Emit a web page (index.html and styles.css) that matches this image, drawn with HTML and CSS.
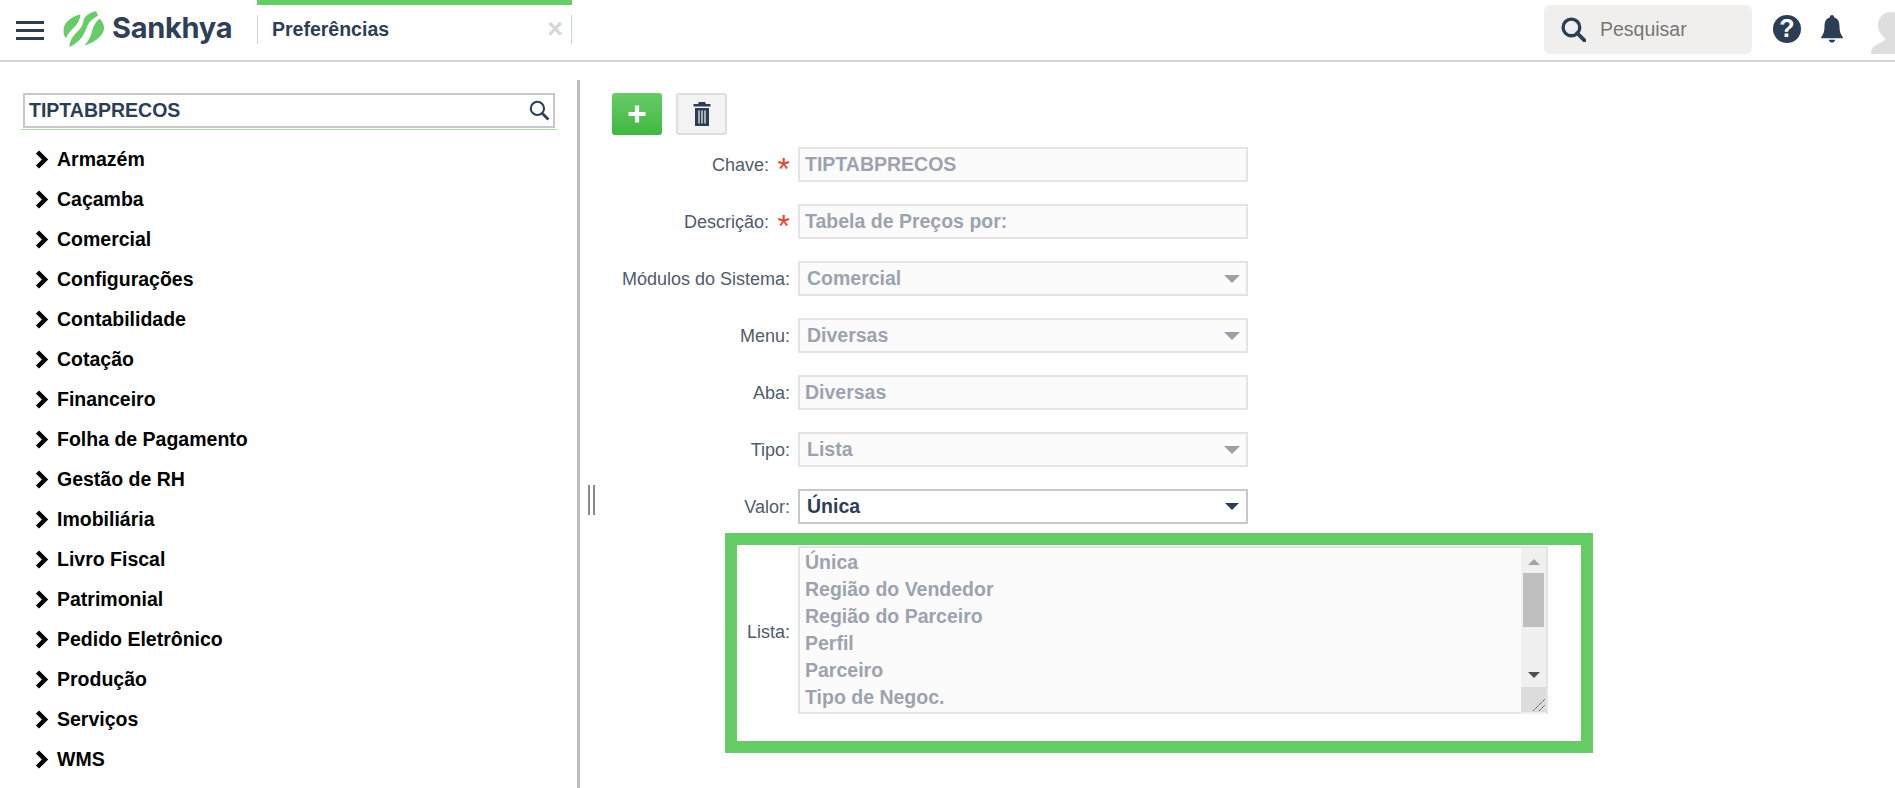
FILE: index.html
```html
<!DOCTYPE html>
<html lang="pt-BR">
<head>
<meta charset="utf-8">
<title>Preferências</title>
<link rel="stylesheet" href="styles.css">
</head>
<body>
<header class="topbar">
  <div class="menu-btn"><span></span><span></span><span></span></div>
  <svg class="logo-mark" viewBox="0 0 41 36" width="41" height="36">
    <path d="M17.500 3.500 C11 4.500 3 9.500 1 16 C0 20 0.500 24.500 3 27.500 C4.500 22.500 7.500 20 11.500 16 C15 12.500 17 8.500 17.500 3.500Z"/>
    <path d="M33 0 C27 1.500 21 5 20.500 10 C20.200 14 18 17 14 21 C9.500 25.500 6.500 30 6.500 36 C11 34 15.500 30.500 18.500 26.500 C22 22 23 18 25 13.500 C27 9.500 31 7 35 4.500Z"/>
    <path d="M36.500 7.500 C39.500 10.500 41.500 14 41 18 C40 26 30 32 21.500 34.500 C25.500 29.500 28 25.500 29 20.500 C30 15.500 32.500 11 36.500 7.500Z"/>
  </svg>
  <span class="logo-text">Sankhya</span>
  <div class="tab">
    <div class="tab-inner">
      <span class="tab-title">Preferências</span>
      <span class="tab-close">×</span>
    </div>
  </div>
  <div class="top-right">
    <div class="global-search">
      <svg class="global-search-icon" viewBox="0 0 24 24" width="25" height="25"><circle cx="10" cy="10" r="8" fill="none" stroke="#2c3e55" stroke-width="3.2"/><path d="M15.500 15.500 L22.500 22.500" stroke="#2c3e55" stroke-width="3.600" stroke-linecap="round"/></svg>
      <span class="global-search-text">Pesquisar</span>
    </div>
    <svg class="help" viewBox="0 0 28 28" width="28" height="28"><circle cx="14" cy="14" r="14" fill="#2c3e55"/><text x="14" y="22" text-anchor="middle" class="help-q">?</text></svg>
    <svg class="bell" viewBox="0 0 24 30" width="24" height="28"><path fill="#2c3e55" d="M12 0 C13.600 0 14.400 1.200 14.400 2.800 C18.600 4 20 7.600 20 12 C20 17 21 20.500 23.500 23.500 L23.500 25 L0.500 25 L0.500 23.500 C3 20.500 4 17 4 12 C4 7.600 5.400 4 9.600 2.800 C9.600 1.200 10.400 0 12 0Z"/><path fill="#2c3e55" d="M8.500 26.500 L15.500 26.500 C15 28.500 13.500 29.500 12 29.500 C10.500 29.500 9 28.500 8.500 26.500Z"/></svg>
    <svg class="avatar" viewBox="0 0 40 42" width="40" height="42"><path fill="#dedede" d="M20 0 C28 0 33 6 33 13 C33 19 29 24 26 26 C26 29 30 30 33 32 C37 33 40 36 40 42 L0 42 C0 36 3 34 7 32 C11 30 14 29 14 26 C11 24 7 19 7 13 C7 6 12 0 20 0Z"/></svg>
  </div>
</header>

<main class="page">
  <aside class="sidebar">
    <div class="tree-search">
      <div class="tree-search-box">
        <span class="tree-search-text">TIPTABPRECOS</span>
        <svg viewBox="0 0 20 20" width="21" height="21"><circle cx="8" cy="8" r="6.300" fill="none" stroke="#2c3e55" stroke-width="2"/><path d="M12.800 12.800 L18.500 18.500" stroke="#2c3e55" stroke-width="2.600"/></svg>
      </div>
    </div>
    <ul class="tree">
      <li class="tree-item"><svg class="chev" viewBox="0 0 14 19" width="14" height="19"><path d="M2.500 2 L10 9.500 L2.500 17" fill="none" stroke="#000" stroke-width="4.500"/></svg>Armazém</li>
      <li class="tree-item"><svg class="chev" viewBox="0 0 14 19" width="14" height="19"><path d="M2.500 2 L10 9.500 L2.500 17" fill="none" stroke="#000" stroke-width="4.500"/></svg>Caçamba</li>
      <li class="tree-item"><svg class="chev" viewBox="0 0 14 19" width="14" height="19"><path d="M2.500 2 L10 9.500 L2.500 17" fill="none" stroke="#000" stroke-width="4.500"/></svg>Comercial</li>
      <li class="tree-item"><svg class="chev" viewBox="0 0 14 19" width="14" height="19"><path d="M2.500 2 L10 9.500 L2.500 17" fill="none" stroke="#000" stroke-width="4.500"/></svg>Configurações</li>
      <li class="tree-item"><svg class="chev" viewBox="0 0 14 19" width="14" height="19"><path d="M2.500 2 L10 9.500 L2.500 17" fill="none" stroke="#000" stroke-width="4.500"/></svg>Contabilidade</li>
      <li class="tree-item"><svg class="chev" viewBox="0 0 14 19" width="14" height="19"><path d="M2.500 2 L10 9.500 L2.500 17" fill="none" stroke="#000" stroke-width="4.500"/></svg>Cotação</li>
      <li class="tree-item"><svg class="chev" viewBox="0 0 14 19" width="14" height="19"><path d="M2.500 2 L10 9.500 L2.500 17" fill="none" stroke="#000" stroke-width="4.500"/></svg>Financeiro</li>
      <li class="tree-item"><svg class="chev" viewBox="0 0 14 19" width="14" height="19"><path d="M2.500 2 L10 9.500 L2.500 17" fill="none" stroke="#000" stroke-width="4.500"/></svg>Folha de Pagamento</li>
      <li class="tree-item"><svg class="chev" viewBox="0 0 14 19" width="14" height="19"><path d="M2.500 2 L10 9.500 L2.500 17" fill="none" stroke="#000" stroke-width="4.500"/></svg>Gestão de RH</li>
      <li class="tree-item"><svg class="chev" viewBox="0 0 14 19" width="14" height="19"><path d="M2.500 2 L10 9.500 L2.500 17" fill="none" stroke="#000" stroke-width="4.500"/></svg>Imobiliária</li>
      <li class="tree-item"><svg class="chev" viewBox="0 0 14 19" width="14" height="19"><path d="M2.500 2 L10 9.500 L2.500 17" fill="none" stroke="#000" stroke-width="4.500"/></svg>Livro Fiscal</li>
      <li class="tree-item"><svg class="chev" viewBox="0 0 14 19" width="14" height="19"><path d="M2.500 2 L10 9.500 L2.500 17" fill="none" stroke="#000" stroke-width="4.500"/></svg>Patrimonial</li>
      <li class="tree-item"><svg class="chev" viewBox="0 0 14 19" width="14" height="19"><path d="M2.500 2 L10 9.500 L2.500 17" fill="none" stroke="#000" stroke-width="4.500"/></svg>Pedido Eletrônico</li>
      <li class="tree-item"><svg class="chev" viewBox="0 0 14 19" width="14" height="19"><path d="M2.500 2 L10 9.500 L2.500 17" fill="none" stroke="#000" stroke-width="4.500"/></svg>Produção</li>
      <li class="tree-item"><svg class="chev" viewBox="0 0 14 19" width="14" height="19"><path d="M2.500 2 L10 9.500 L2.500 17" fill="none" stroke="#000" stroke-width="4.500"/></svg>Serviços</li>
      <li class="tree-item"><svg class="chev" viewBox="0 0 14 19" width="14" height="19"><path d="M2.500 2 L10 9.500 L2.500 17" fill="none" stroke="#000" stroke-width="4.500"/></svg>WMS</li>
    </ul>
  </aside>

  <div class="splitter"></div>
  <div class="grip"><span></span><span></span></div>

  <section class="content">
    <div class="actions">
      <div class="btn btn-add"><svg viewBox="0 0 20 20" width="20" height="20"><path d="M10 1.500 V18.500 M1.500 10 H18.500" stroke="#fff" stroke-width="4.200"/></svg></div>
      <div class="btn btn-del"><svg viewBox="0 0 18 24" width="18" height="24"><path fill="#2c3e55" d="M6 0 H12 L13 2 H17.500 V4.500 H0.500 V2 H5Z"/><path fill="#2c3e55" d="M2 6 H16 V24 H2Z"/><path d="M6 8.500 V21.500 M9 8.500 V21.500 M12 8.500 V21.500" stroke="#e8e8e8" stroke-width="1.300"/></svg></div>
    </div>

    <div class="row">
      <label class="label">Chave:<span class="req">*</span></label>
      <div class="field">TIPTABPRECOS</div>
    </div>
    <div class="row">
      <label class="label">Descrição:<span class="req">*</span></label>
      <div class="field">Tabela de Preços por:</div>
    </div>
    <div class="row">
      <label class="label label-plain">Módulos do Sistema:</label>
      <div class="field field-select">Comercial<i class="caret"></i></div>
    </div>
    <div class="row">
      <label class="label label-plain">Menu:</label>
      <div class="field field-select">Diversas<i class="caret"></i></div>
    </div>
    <div class="row">
      <label class="label label-plain">Aba:</label>
      <div class="field">Diversas</div>
    </div>
    <div class="row">
      <label class="label label-plain">Tipo:</label>
      <div class="field field-select">Lista<i class="caret"></i></div>
    </div>
    <div class="row">
      <label class="label label-plain">Valor:</label>
      <div class="field field-select field-active">Única<i class="caret caret-dark"></i></div>
    </div>

    <div class="highlight">
      <label class="label label-plain">Lista:</label>
      <div class="listbox">
        <div class="listbox-items">
          <div>Única</div>
          <div>Região do Vendedor</div>
          <div>Região do Parceiro</div>
          <div>Perfil</div>
          <div>Parceiro</div>
          <div>Tipo de Negoc.</div>
        </div>
        <div class="scrollbar">
          <i class="sb-up"></i>
          <i class="sb-thumb"></i>
          <i class="sb-down"></i>
        </div>
        <div class="resizer"><svg viewBox="0 0 25 25" width="25" height="25"><path d="M12 24 L24 12 M18 24 L24 18" stroke="#555" stroke-width="1" stroke-dasharray="1.500 .5"/></svg></div>
      </div>
    </div>
  </section>
</main>
</body>
</html>
```
FILE: styles.css
```css
* { box-sizing: border-box; }
html, body { margin: 0; padding: 0; height: 788px; overflow: hidden; background: #fff; }
body { font-family: "Liberation Sans", Arial, sans-serif; color: #2c3e55; }

.topbar { display: flex; align-items: flex-start; height: 62px; border-bottom: 2px solid #d4d4d4; position: relative; overflow: hidden; }
.menu-btn { display: flex; flex-direction: column; justify-content: space-between; width: 28px; height: 19px; margin: 21px 0 0 16px; }
.menu-btn span { display: block; height: 3px; background: #2c3e55; }
.logo-mark { margin: 11px 0 0 19px; flex: none; overflow: visible; }
.logo-mark path { fill: #66cc66; }
.logo-text { margin: 10px 0 0 8px; width: 145px; font-family: "Inter", sans-serif; font-weight: 700; font-size: 29px; line-height: 36px; letter-spacing: -0.3px; color: #2f3f56; }

.tab { width: 315px; height: 60px; border-top: 5px solid #66cc66; padding-top: 10px; flex: none; }
.tab-inner { display: flex; align-items: center; justify-content: space-between; height: 29px; border-left: 1px solid #ccd3dc; border-right: 1px solid #ccd3dc; padding: 0 8px 0 14px; }
.tab-title { font-size: 19.500px; font-weight: 700; color: #2c3e55; }
.tab-close { font-size: 27px; font-weight: 700; line-height: 29px; color: #d3d6da; }

.top-right { margin-left: auto; display: flex; align-items: flex-start; width: 351px; flex: none; }
.global-search { display: flex; align-items: center; width: 208px; height: 49px; margin-top: 5px; background: #f0efed; border-radius: 6px; padding-left: 17px; flex: none; }
.global-search-icon { flex: none; }
.global-search-text { margin-left: 14px; font-size: 19.500px; color: #777; }
.help { margin: 15px 0 0 21px; flex: none; }
.help-q { font-family: "Liberation Sans", sans-serif; font-size: 25px; font-weight: 700; fill: #fff; }
.bell { margin: 15px 0 0 19px; flex: none; }
.avatar { margin: 12px 0 0 27px; flex: none; }

.page { display: flex; height: 726px; position: relative; }

.sidebar { width: 577px; flex: none; padding: 31px 0 0 21px; }
.tree-search { width: 536px; padding-bottom: 1px; border-bottom: 1px solid #a8dba8; }
.tree-search-box { display: flex; align-items: center; justify-content: space-between; width: 532px; height: 35px; margin-left: 2px; border: 2px solid #c8c8c8; padding: 0 3px 0 4px; }
.tree-search-text { font-size: 19.500px; font-weight: 700; color: #2c3e55; }
.tree { list-style: none; margin: 9px 0 0; padding: 0 0 0 14px; }
.tree-item { display: flex; align-items: center; height: 40px; font-size: 19.500px; font-weight: 700; color: #000; }
.chev { margin-right: 8px; flex: none; }

.splitter { width: 3px; flex: none; margin-top: 18px; background: #bdbdbd; }
.grip { position: absolute; left: 588px; top: 423px; display: flex; gap: 3px; }
.grip span { display: block; width: 2px; height: 30px; background: #8a8a8a; }

.content { flex: 1; padding: 31px 0 0 32px; }
.actions { display: flex; gap: 14px; }
.btn { display: flex; align-items: center; justify-content: center; width: 50px; height: 42px; border-radius: 3px; }
.btn-add { background: linear-gradient(#68cb68, #3fb83f); }
.btn-del { width: 51px; background: #f3f3f3; border: 2px solid #dedede; }

.row { display: flex; align-items: center; height: 35px; margin-top: 22px; }
.actions + .row { margin-top: 12px; }
.label { display: flex; align-items: center; justify-content: flex-end; width: 186px; padding: 2px 29px 0 0; font-size: 18px; color: #505b6b; position: relative; flex: none; }
.label-plain { padding-right: 8px; }
.req { position: absolute; right: 8px; top: 0; font-size: 32px; line-height: 32px; height: 20px; color: #e8452c; }
.field { position: relative; width: 450px; height: 35px; border: 2px solid #e4e4e4; background: #fbfbfb; padding: 0 5px; font-size: 19.500px; font-weight: 700; line-height: 31px; color: #9ca3af; }
.field-select { padding-left: 7px; }
.field-active { background: #fff; border-color: #c8c8c8; color: #2c3e55; }
.caret { position: absolute; right: 6px; top: 12px; border-left: 8px solid transparent; border-right: 8px solid transparent; border-top: 8px solid #9aa1ab; }
.caret-dark { right: 7px; border-left-width: 7px; border-right-width: 7px; border-top-width: 7px; border-top-color: #2c3e55; }

.highlight { display: flex; align-items: center; width: 868px; height: 220px; margin: 9px 0 0 113px; border: 12px solid #66cc66; padding-bottom: 28px; }
.highlight .label { width: 61px; padding-top: 6px; }
.listbox { position: relative; width: 750px; height: 168px; border: 2px solid #e4e4e4; background: #fbfbfb; margin-top: 1px; flex: none; }
.listbox-items { padding: 1px 5px; font-size: 19.500px; font-weight: 700; line-height: 27px; color: #9ca3af; }
.scrollbar { position: absolute; top: 0; right: 0; width: 25px; height: 166px; background: #f0f0f0; }
.sb-up { position: absolute; left: 7px; top: 11px; border-left: 6px solid transparent; border-right: 6px solid transparent; border-bottom: 6px solid #a3a3a3; }
.sb-thumb { position: absolute; left: 2px; top: 25px; width: 21px; height: 54px; background: #bfbfbf; }
.sb-down { position: absolute; left: 7px; top: 124px; border-left: 6px solid transparent; border-right: 6px solid transparent; border-top: 6px solid #505050; }
.resizer { position: absolute; right: 0; bottom: 0; width: 25px; height: 25px; background: #dcdcdc; }
.resizer svg { display: block; }
```
